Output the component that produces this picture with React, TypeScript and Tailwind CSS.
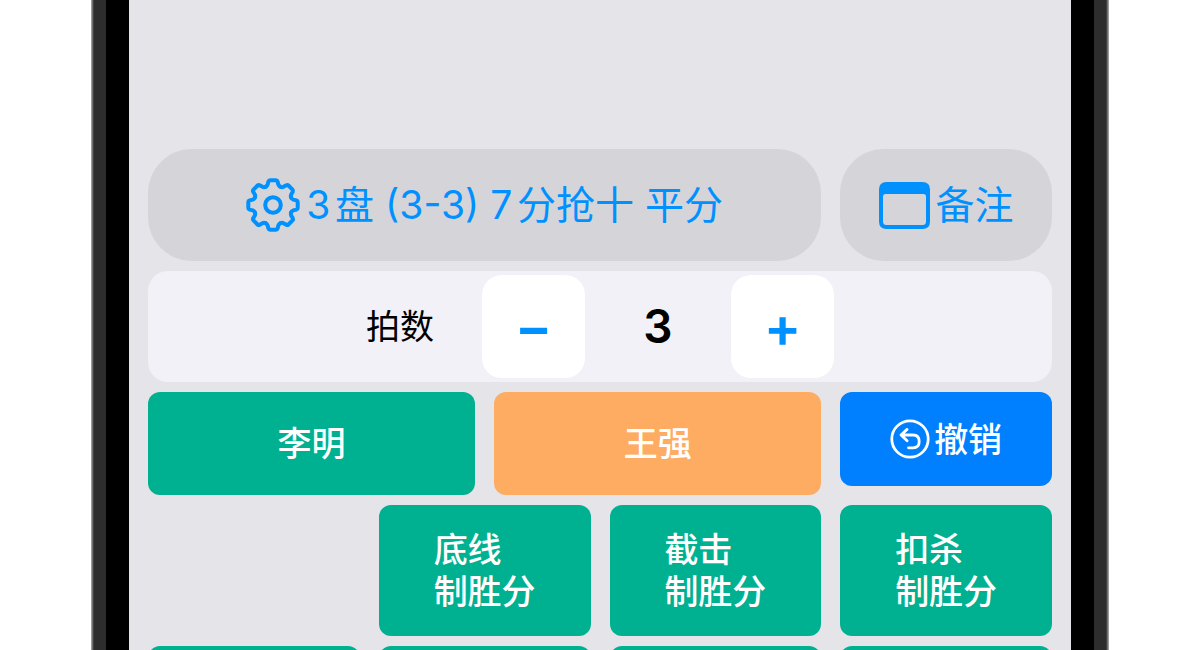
import React, { useState } from 'react';

interface Shot {
  id: number;
  lines: string[];
}

const shots: Shot[] = [
  { id: 1, lines: ['底线', '制胜分'] },
  { id: 2, lines: ['截击', '制胜分'] },
  { id: 3, lines: ['扣杀', '制胜分'] },
];

const teeth = [0, 45, 90, 135, 180, 225, 270, 315];

const GearIcon: React.FC = () => (
  <svg viewBox="-27 -27 54 54" className="size-[54px] shrink-0" fill="none" stroke="currentColor" strokeWidth="4" strokeLinecap="round" strokeLinejoin="round" aria-hidden="true">
    {teeth.map(angle => (
      <path key={angle} transform={`rotate(${angle})`} d="M-7.5 -18.1Q-5.9 -18.8 -5.4 -20.3L-4.6 -23.4Q-4.2 -24.700 -2.9 -24.700L2.9 -24.700Q4.2 -24.700 4.6 -23.4L5.4 -20.3Q5.9 -18.8 7.5 -18.1" />
    ))}
    <circle r="7.8" />
  </svg>
);

const NoteIcon: React.FC = () => (
  <svg viewBox="0 0 51 47" className="h-[47px] w-[51px] shrink-0" aria-hidden="true">
    <path fill="currentColor" fillRule="evenodd" d="M7.500 0H43.500Q51 0 51 7.500V39.500Q51 47 43.500 47H7.500Q0 47 0 39.500V7.500Q0 0 7.500 0ZM6.500 12Q4 12 4 14.500V39.500Q4 43 7.500 43H43.500Q47 43 47 39.500V14.500Q47 12 44.500 12Z" />
  </svg>
);

const UndoIcon: React.FC = () => (
  <svg viewBox="-20 -20 40 40" className="size-10 shrink-0" fill="none" stroke="currentColor" strokeWidth="2.8" strokeLinecap="round" strokeLinejoin="round" aria-hidden="true">
    <circle r="18.2" />
    <path d="M-2.900 -9.600L-9 -4L-2.900 1.800M-9 -4H3Q9.200 -4 9.200 2.500Q9.200 8.800 3 8.800H-1.500" />
  </svg>
);

const App: React.FC = () => {
  const [strokes, setStrokes] = useState(3);

  return (
    <div className="flex h-screen overflow-hidden bg-white px-[91px] font-['Inter','Noto_Sans_CJK_SC',sans-serif]">
      <div className="w-[15px] shrink-0 bg-linear-to-r from-[#b5b5b5] via-[#2d2d2d] via-20% to-[#2d2d2d]" />
      <main className="flex min-w-0 flex-1 flex-col gap-[10px] border-x-[23px] border-black bg-[#e5e4e9] px-[19px] pt-[149px]">
        <div className="grid shrink-0 grid-cols-4 gap-x-[19px] text-[39px] text-[#0091ff]">
          <button className="col-span-3 flex h-28 items-center justify-center gap-1.5 rounded-[44px] bg-[#d5d4d9] whitespace-pre">
            <GearIcon />
            <span className="[text-autospace:normal]">3盘 (3-3) 7分抢十 平分</span>
          </button>
          <button className="flex h-28 items-center justify-center gap-1.5 rounded-[44px] bg-[#d5d4d9]">
            <NoteIcon />
            <span>备注</span>
          </button>
        </div>

        <div className="flex h-[111px] shrink-0 items-center justify-center rounded-[20px] bg-[#f2f1f7]">
          <label htmlFor="strokes" className="mr-12 text-[34px] text-black">拍数</label>
          <button onClick={() => setStrokes(n => Math.max(0, n - 1))} className="size-[103px] rounded-[20px] bg-white text-[56px] font-semibold text-[#0091ff]">−</button>
          <output id="strokes" className="w-[146px] text-center text-[46px] font-semibold text-black">{strokes}</output>
          <button onClick={() => setStrokes(n => n + 1)} className="size-[103px] rounded-[20px] bg-white text-[56px] font-semibold text-[#0091ff]">+</button>
        </div>

        <div className="grid shrink-0 grid-cols-4 items-start gap-x-[19px] text-[34px] font-medium text-white">
          <div className="col-span-3 grid grid-cols-2 gap-x-[19px]">
            <button className="h-[103px] rounded-xl bg-[#00b191]">李明</button>
            <button className="h-[103px] rounded-xl bg-[#ffac63]">王强</button>
          </div>
          <button className="flex h-[94px] items-center justify-center gap-1 rounded-xl bg-[#007fff]">
            <UndoIcon />
            <span>撤销</span>
          </button>
        </div>

        <div className="grid shrink-0 grid-cols-4 gap-x-[19px] gap-y-[10px] text-[34px] leading-[42px] font-medium text-white">
          {shots.map(shot => (
            <button key={shot.id} className="flex h-[131px] items-center justify-center rounded-xl bg-[#00b191] text-left first:col-start-2">
              <span>
                {shot.lines.map(line => (
                  <span key={line} className="block">{line}</span>
                ))}
              </span>
            </button>
          ))}
          {[0, 1, 2, 3].map(n => (
            <button key={n} className="h-[131px] rounded-xl bg-[#00b191]" />
          ))}
        </div>
      </main>
      <div className="w-[15px] shrink-0 bg-linear-to-l from-[#b5b5b5] via-[#2d2d2d] via-20% to-[#2d2d2d]" />
    </div>
  );
};

export default App;
